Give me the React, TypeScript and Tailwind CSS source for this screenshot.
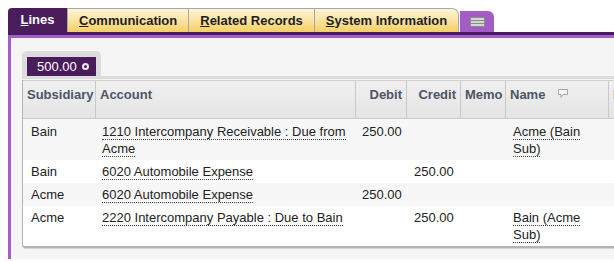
import React from "react";

const columns = [
  { key: "sub", title: "Subsidiary", w: "w-[73px]", align: "left" },
  { key: "acct", title: "Account", w: "w-[260px]", align: "left" },
  { key: "debit", title: "Debit", w: "w-[51px]", align: "right" },
  { key: "credit", title: "Credit", w: "w-[54px]", align: "right" },
  { key: "memo", title: "Memo", w: "w-[45px]", align: "left" },
  { key: "name", title: "Name", w: "w-[103px]", align: "left" },
  { key: "dept", title: "Dept", w: "w-[120px]", align: "left" },
];

const rows = [
  {
    sub: "Bain",
    acct: "1210 Intercompany Receivable : Due from Acme",
    debit: "250.00",
    credit: "",
    name: "Acme (Bain Sub)",
  },
  { sub: "Bain", acct: "6020 Automobile Expense", debit: "", credit: "250.00", name: "" },
  { sub: "Acme", acct: "6020 Automobile Expense", debit: "250.00", credit: "", name: "" },
  {
    sub: "Acme",
    acct: "2220 Intercompany Payable : Due to Bain",
    debit: "",
    credit: "250.00",
    name: "Bain (Acme Sub)",
  },
];

const Tab = (props: any) => {
  const { first, rest, active, last } = props;
  if (active) {
    return (
      <div className="flex h-[24px] w-[59px] items-center justify-center rounded-tl-[4px] bg-[#4b1c5c] text-white">
        <span>
          <span className="underline">{first}</span>
          {rest}
        </span>
      </div>
    );
  }
  return (
    <div
      className={`flex h-[24px] items-center border-t border-r border-[#a8a8a8] bg-gradient-to-b from-[#fff6d8] to-[#f5cf63] px-[11px] text-[#1e1e1e] ${
        last ? "rounded-tr-[7px]" : ""
      }`}
    >
      <span>
        <span className="underline">{first}</span>
        {rest}
      </span>
    </div>
  );
};

const ListIcon = () => (
  <svg width="15" height="10" viewBox="0 0 15 10">
    <rect x="0" y="0" width="15" height="10" fill="#8c8c8c" />
    <rect x="1" y="1" width="13" height="2" fill="#d6d6d6" />
    <rect x="1" y="4" width="13" height="2" fill="#d6d6d6" />
    <rect x="1" y="7" width="13" height="2" fill="#d6d6d6" />
  </svg>
);

// speech bubble in the Name header
const BubbleIcon = () => (
  <svg width="12" height="11" viewBox="0 0 12 11">
    <path
      d="M1.5 1.5 H10.5 V6.5 H6 L4 9.5 V6.5 H1.5 Z"
      fill="#fbfbfb"
      stroke="#a5a5a5"
      strokeWidth="1"
      strokeLinejoin="round"
    />
  </svg>
);

const LinkText = ({ children }: any) => (
  <span className="border-b border-dotted border-[#444]">{children}</span>
);

const App = () => {
  return (
    <div className="h-[262px] w-[614px] overflow-hidden bg-white font-['Liberation_Sans',Arial,sans-serif] text-[13px] text-[#222]">
      {/* tab strip */}
      <div className="flex items-end pt-[8px] pl-[8px] text-[13px] font-bold">
        <Tab first="L" rest="ines" active />
        <div className="h-[24px] w-px bg-[#a8a8a8]" />
        <Tab first="C" rest="ommunication" />
        <Tab first="R" rest="elated Records" />
        <Tab first="S" rest="ystem Information" last />
        <div className="ml-px flex h-[21px] w-[34px] items-center justify-center rounded-tr-[6px] bg-[#a35cc6]">
          <ListIcon />
        </div>
      </div>
      <div className="ml-[8px] h-[3px] bg-[#4b1c5c]" />
      <div className="ml-[8px] h-[3px] bg-[#a55ec8]" />

      {/* panel */}
      <div className="ml-[8px] h-[221px] border-l-[3px] border-[#a55ec8] bg-[#f5f5f5] pt-[13px] pl-[11px]">
        <div className="flex border-b-[3px] border-[#dcdcdc]">
          <div className="rounded-t-[5px] bg-[#dcdcdc] px-[5px] pt-[6px]">
            <div className="flex h-[19px] w-[69px] items-center gap-[5px] bg-[#4b1c5c] pl-[10px] text-white">
              <span>500.00</span>
              <span className="h-[7px] w-[7px] rounded-full border-2 border-[#e8e8e8]" />
            </div>
          </div>
        </div>

        <div className="mt-px overflow-hidden rounded-bl-[4px] border-b-2 border-l border-[#b4b4b4] bg-white shadow-[0_1px_0_#d6d6d6]">
          <div className="flex w-[700px] border-t border-[#d0d0d0]">
            {columns.map((c) => (
              <div
                key={c.key}
                className={`${c.w} flex h-[38px] shrink-0 items-start gap-[12px] border-r border-b border-[#c8c8c8] bg-gradient-to-b from-[#f0f0f0] to-[#e4e4e4] px-[4px] pt-[4px] font-bold text-[#4c5566] ${
                  c.align === "right" ? "justify-end" : ""
                }`}
              >
                <span>{c.title}</span>
                {c.key === "name" && (
                  <span className="pt-[3px]">
                    <BubbleIcon />
                  </span>
                )}
              </div>
            ))}
          </div>
          {rows.map((r, i) => (
            <div
              key={i}
              className={`flex w-[700px] leading-[17px] ${
                i % 2 === 0 ? "bg-[#f7f7f7]" : "bg-white"
              } ${i === 0 ? "pt-[1px]" : ""}`}
            >
              <div className="w-[73px] shrink-0 py-[3px] pl-[8px]">{r.sub}</div>
              <div className="w-[260px] shrink-0 py-[3px] pl-[6px] pr-[2px]">
                <LinkText>{r.acct}</LinkText>
              </div>
              <div className="w-[51px] shrink-0 py-[3px] pl-[6px]">{r.debit}</div>
              <div className="w-[54px] shrink-0 py-[3px] pl-[7px]">{r.credit}</div>
              <div className="w-[45px] shrink-0 py-[3px]" />
              <div className="w-[103px] shrink-0 py-[3px] pl-[7px] pr-[20px]">
                {r.name && <LinkText>{r.name}</LinkText>}
              </div>
              <div className="w-[120px] shrink-0" />
            </div>
          ))}
        </div>
      </div>
    </div>
  );
};

export default App;
